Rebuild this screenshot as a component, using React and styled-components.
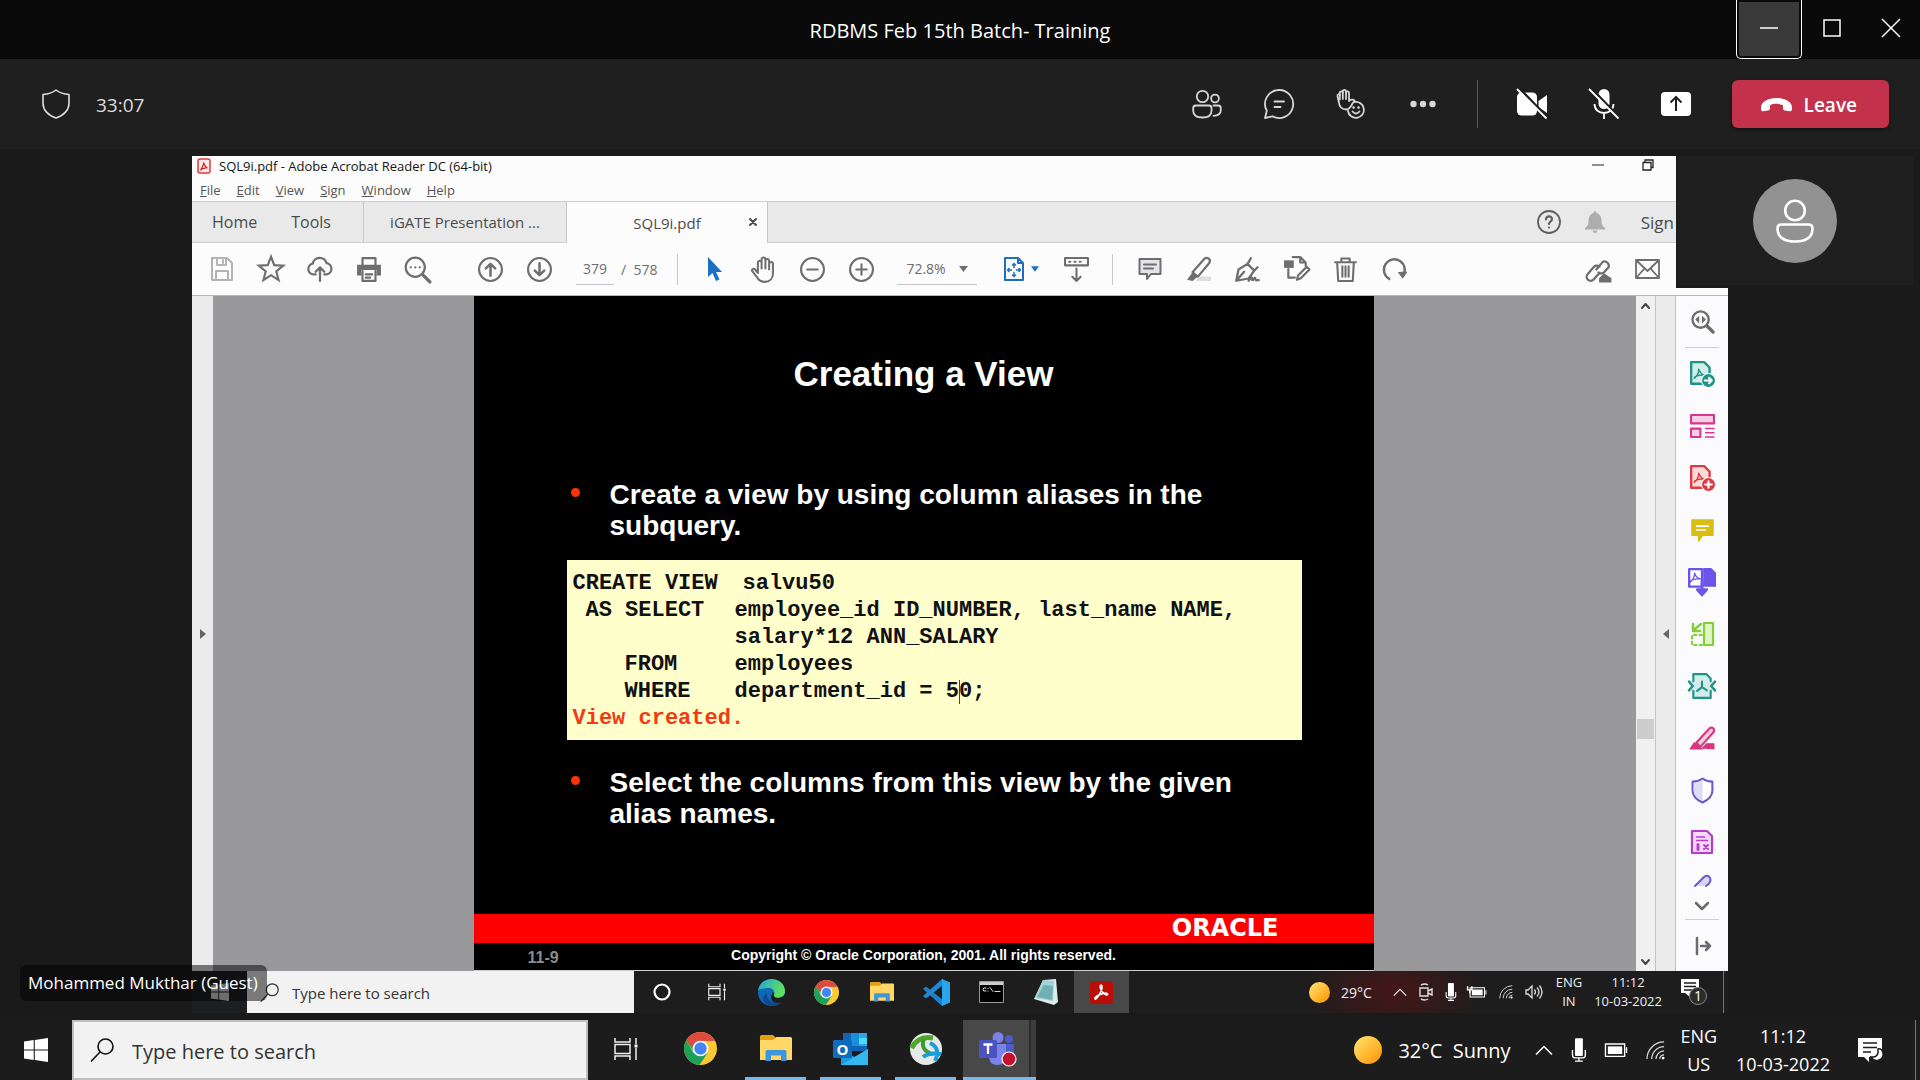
import React from "react";
import styled, { createGlobalStyle } from "styled-components";

const GlobalStyle = createGlobalStyle`
  * { box-sizing: border-box; }
  body { margin: 0; background: #1a1a1a; }
  button, input, select { font: inherit; color: inherit; border: 0; background: none; padding: 0; margin: 0; outline: 0; border-radius: 0; }
  svg { display: block; flex: none; overflow: visible; }
`;

const Page = styled.div`
  min-height: 100vh;
  display: flex;
  flex-direction: column;
  background: #1a1a1a;
  color: #fff;
  font-family: "Open Sans", "Noto Sans", sans-serif;
  overflow: hidden;
`;

/* ---------- meeting window ---------- */
const TitleBar = styled.header`
  display: grid;
  grid-template-columns: 1fr auto 1fr;
  align-items: center;
  height: 59px;
  background: #0a0a0a;
  border-bottom: 1px solid #000;
`;
const WindowTitle = styled.h1`
  grid-column: 2;
  margin: 0;
  font-size: 20px;
  line-height: 26px;
  font-weight: 400;
  padding-top: 2px;
`;
const WindowButtons = styled.div`
  display: flex;
  justify-content: flex-end;
  height: 59px;
`;
const WindowButton = styled.button`
  display: grid;
  place-items: center;
  width: ${(p) => (p.$active ? 66 : 59)}px;
  height: 59px;
  padding-bottom: 3px;
  border-radius: 0 0 5px 5px;
  ${(p) => p.$active && "background: #3a3a3a; border: 1px solid #fff; border-top: 0; box-shadow: inset 0 0 0 2px #0a0a0a;"}
`;
const CallBar = styled.div`
  display: flex;
  align-items: center;
  height: 90px;
  padding: 0 31px 0 42px;
  background: #1f1f1f;
  color: #dcdcdc;
`;
const Timer = styled.time`
  margin-left: 26px;
  padding-top: 2px;
  font-size: 19px;
  line-height: 26px;
`;
const CallActions = styled.div`
  display: flex;
  align-items: center;
  margin-left: auto;
`;
const CallButton = styled.button`
  display: grid;
  place-items: center;
  width: 72px;
  height: 48px;
  color: ${(p) => (p.$bright ? "#fff" : "#d6d6d6")};
`;
const CallDivider = styled.span`
  width: 1px;
  height: 48px;
  margin: 0 18px;
  background: #5a5a5a;
`;
const LeaveButton = styled.button`
  display: flex;
  align-items: center;
  gap: 12px;
  height: 48px;
  margin-left: 20px;
  padding: 2px 32px 0 29px;
  border-radius: 6px;
  background: #c4314b;
  color: #fff;
  font-size: 19px;
  font-weight: 600;
  box-shadow: 0 2px 4px #0006;
`;
const Stage = styled.main`
  position: relative;
  flex: 1;
  display: flex;
  justify-content: center;
  padding: 7px 0;
`;
const Participant = styled.div`
  position: absolute;
  top: 0;
  right: 0;
  width: 244px;
  height: 139px;
  padding: 7px 7px 3px 1px;
  background: #1a1a1a;
`;
const ParticipantFace = styled.div`
  display: grid;
  place-items: center;
  height: 100%;
  background: #1f1f1f;
`;
const Avatar = styled.div`
  display: grid;
  place-items: center;
  width: 84px;
  height: 84px;
  border-radius: 50%;
  background: #929292;
`;
const PresenterName = styled.div`
  position: absolute;
  left: 20px;
  bottom: 19px;
  padding: 5px 9px 6px 8px;
  border-radius: 6px;
  background: #00000080;
  font-size: 17px;
  line-height: 25px;
`;

/* ---------- shared desktop ---------- */
const SharedScreen = styled.section`
  width: 80%;
  display: flex;
  flex-direction: column;
  background: #fcfcfd;
  color: #4b4b4b;
`;
const ReaderTitle = styled.div`
  display: flex;
  align-items: center;
  gap: 8px;
  height: 22px;
  padding: 0 74px 2px 5px;
  color: #161616;
  font-size: 13px;
`;
const ReaderWindowButtons = styled.div`
  display: flex;
  gap: 38px;
  margin-left: auto;
  padding-bottom: 2px;
`;
const BareButton = styled.button`
  display: grid;
  place-items: center;
`;
const MenuBar = styled.nav`
  display: flex;
  align-items: center;
  gap: 16px;
  height: 23px;
  padding-left: 8px;
  font-size: 13px;
  color: #555;
  button::first-letter { text-decoration: underline; }
`;
const TabBar = styled.div`
  display: flex;
  height: 42px;
  background: #e9e9ea;
  border-top: 1px solid #cfcfd1;
  border-bottom: 1px solid #cfcfd1;
  font-size: 15px;
`;
const HomeTabs = styled.div`
  display: flex;
  align-items: center;
  gap: 34px;
  width: 171px;
  padding-left: 20px;
  font-size: 16px;
`;
const DocTab = styled.div`
  position: relative;
  display: grid;
  place-items: center;
  width: ${(p) => (p.$active ? 202 : 203)}px;
  border-left: 1px solid #c6c6c8;
  border-right: ${(p) => (p.$active ? "1px solid #c6c6c8" : "0")};
  ${(p) => p.$active && "background: #fcfcfd; margin-bottom: -1px;"}
`;
const CloseTab = styled.button`
  position: absolute;
  right: 10px;
  top: 16px;
`;
const TabRight = styled.div`
  display: flex;
  align-items: center;
  gap: 24px;
  margin-left: auto;
  padding-right: 54px;
  font-size: 17px;
`;
const SignIn = styled.button`
  padding-left: 12px;
`;
const ToolBar = styled.div`
  display: flex;
  align-items: center;
  height: 53px;
  padding: 0 56px 0 5px;
  border-bottom: 1px solid #b9b9bb;
  color: #6e6e70;
  font-size: 14px;
`;
const ToolGroup = styled.div`
  display: flex;
  margin-left: ${(p) => (p.$end ? "auto" : `${p.$gap || 0}px`)};
`;
const Tool = styled.button`
  display: grid;
  place-items: center;
  width: 49px;
  height: 40px;
  color: ${(p) => p.$color || "inherit"};
`;
const FitTool = styled.button`
  display: flex;
  align-items: center;
  gap: 6px;
  margin-left: 26px;
  color: #1d6fc4;
`;
const PageInput = styled.input`
  width: 38px;
  height: 31px;
  margin: 0 7px 0 12px;
  border-bottom: 1px solid #c4c4c6;
  text-align: center;
`;
const ToolDivider = styled.span`
  width: 1px;
  height: 31px;
  margin-left: ${(p) => p.$gap}px;
  background: #c9c9cb;
`;
const ZoomField = styled.label`
  display: flex;
  align-items: center;
  justify-content: space-between;
  width: 80px;
  height: 31px;
  margin-left: 11px;
  padding: 0 9px;
  border-bottom: 1px solid #c4c4c6;
  select { appearance: none; }
`;
const Document = styled.div`
  flex: 1;
  display: flex;
  background: #99989a;
`;
const NavStrip = styled.button`
  display: grid;
  place-items: center;
  width: ${(p) => (p.$right ? 20 : 21)}px;
  background: #ebebeb;
  border-right: ${(p) => (p.$right ? "1px solid #c4c4c4" : "0")};
`;
const Canvas = styled.div`
  flex: 1;
  display: flex;
  justify-content: center;
  padding-right: 2px;
`;
const ScrollTrack = styled.div`
  display: grid;
  grid-template-rows: 19px 404px 20px 1fr 19px;
  justify-items: center;
  align-items: center;
  width: 20px;
  border-right: 1px solid #c4c4c4;
  background: #f0f0f1;
`;
const ScrollThumb = styled.span`
  grid-row: 3;
  width: 17px;
  height: 20px;
  background: #cdcdcd;
`;
const ScrollEnd = styled.button`
  grid-row: ${(p) => p.$row};
`;
const SidePanel = styled.aside`
  display: flex;
  flex-direction: column;
  align-items: center;
  width: 52px;
  background: #fbfafc;
`;
const SideTool = styled.button`
  display: grid;
  place-items: center;
  width: 52px;
  height: ${(p) => p.$h || 52}px;
  overflow: hidden;
`;
const SideRule = styled.span`
  width: 34px;
  height: 1px;
  background: #cfcfd1;
`;

/* ---------- slide ---------- */
const Slide = styled.article`
  display: flex;
  flex-direction: column;
  width: 900px;
  background: #000;
  border-bottom: 1px solid #d0d0d0;
  color: #fff;
  font-family: "Liberation Sans", Arial, sans-serif;
  font-weight: 700;
`;
const SlideTitle = styled.h2`
  margin: 58px 0 82px;
  text-align: center;
  font-size: 35px;
  line-height: 40px;
`;
const Bullet = styled.p`
  position: relative;
  margin: 0;
  padding: 3px 120px 3px 136px;
  font-size: 28px;
  line-height: 31px;
  &::before {
    content: "";
    position: absolute;
    left: 97px;
    top: 12px;
    width: 9px;
    height: 9px;
    border-radius: 50%;
    background: #ff3300;
  }
`;
const CodeBox = styled.div`
  margin: 16px 72px 24px 93px;
  padding: 10px 6px 8px;
  height: 180px;
  background: #ffffcc;
  color: #111;
  font-family: "Liberation Mono", "Courier New", monospace;
  font-size: 22px;
  line-height: 27px;
`;
const CodeLine = styled.div`
  display: flex;
  white-space: pre;
  color: ${(p) => (p.$result ? "#f23a14" : "inherit")};
`;
const Keyword = styled.span`
  width: ${(p) => (p.$wide ? 170 : 162)}px;
  padding-left: ${(p) => p.$indent * 13}px;
`;
const Caret = styled.span`
  position: relative;
  &::after {
    content: "";
    position: absolute;
    left: 0;
    top: 1px;
    width: 1px;
    height: 24px;
    background: #444;
  }
`;
const OracleBar = styled.div`
  display: flex;
  align-items: center;
  justify-content: flex-end;
  height: 29px;
  margin-top: auto;
  padding-right: 95px;
  background: #ff0000;
  font-family: "DejaVu Sans", sans-serif;
  font-weight: 700;
  font-size: 24px;
  line-height: 29px;
`;
const SlideFooter = styled.footer`
  display: grid;
  grid-template-columns: 1fr auto 1fr;
  height: 27px;
  font-size: 14px;
  line-height: 24px;
`;
const SlideNumber = styled.span`
  padding: 3px 0 0 54px;
  color: #8c8c8c;
  font-size: 16px;
`;

/* ---------- taskbars ---------- */
const InnerTaskbar = styled.div`
  display: flex;
  align-items: center;
  height: 42px;
  background: radial-gradient(ellipse 90px 60px at 1200px 20px, #451717, #1d1d1d);
  color: #eee;
  font-size: 14px;
`;
const StartButton = styled.button`
  display: grid;
  place-items: center;
  width: ${(p) => (p.$large ? 72 : 55)}px;
  height: 100%;
  background: ${(p) => (p.$large ? "none" : "#1d2023")};
`;
const SearchBox = styled.label`
  display: flex;
  align-items: center;
  gap: ${(p) => (p.$large ? 18 : 13)}px;
  width: ${(p) => (p.$large ? 516 : 387)}px;
  height: 100%;
  padding-left: ${(p) => (p.$large ? 16 : 13)}px;
  border: ${(p) => (p.$large ? "2px solid #bfbfbf" : "0")};
  background: #f2f2f2;
  color: #222;
  font-size: ${(p) => (p.$large ? 20 : 15)}px;
  input { flex: 1; min-width: 0; padding-top: 2px; }
  input::placeholder { color: #333; opacity: 1; }
`;
const InnerApp = styled.button`
  display: grid;
  place-items: center;
  width: 55px;
  height: 100%;
  background: ${(p) => (p.$active ? "#484848" : "none")};
`;
const Tray = styled.div`
  display: flex;
  align-items: center;
  height: 100%;
  margin-left: auto;
  padding-right: 4px;
`;
const Weather = styled.button`
  display: flex;
  align-items: center;
  gap: ${(p) => (p.$large ? 16 : 11)}px;
  font-size: ${(p) => (p.$large ? 20 : 14)}px;
  white-space: pre;
`;
const TrayIcons = styled.div`
  display: flex;
  align-items: center;
  gap: ${(p) => (p.$large ? 18 : 12)}px;
  margin: ${(p) => (p.$large ? "0 15px 0 24px" : "0 13px 0 21px")};
`;
const TrayText = styled.button`
  line-height: ${(p) => (p.$large ? 28 : 19)}px;
  font-size: ${(p) => (p.$large ? 18 : 13)}px;
  text-align: center;
  white-space: pre-line;
`;
const DateButton = styled(TrayText)`
  margin-left: ${(p) => (p.$large ? 19 : 12)}px;
`;
const Notify = styled.button`
  margin: ${(p) => (p.$large ? "0 32px 0 28px" : "0 20px 0 19px")};
`;
const TrayEdge = styled.span`
  width: 1px;
  height: 100%;
  background: #777;
`;
const Taskbar = styled.footer`
  display: flex;
  align-items: center;
  height: 60px;
  background: #1c1c1c;
  color: #fff;
`;
const TaskButton = styled.button`
  display: grid;
  place-items: center;
  width: ${(p) => (p.$active ? 73 : 61)}px;
  height: 60px;
  margin-left: ${(p) => (p.$active || p.$first ? 7 : 14)}px;
  padding-right: ${(p) => (p.$active ? 4 : 0)}px;
  border-bottom: 3px solid ${(p) => (p.$open ? "#76b9ed" : "transparent")};
  background: ${(p) => (p.$active ? "linear-gradient(90deg, #484848 66px, #2a2a2a 66px, #2a2a2a 68px, #3c3c3c 68px)" : "none")};
`;

/* ---------- drawings ---------- */
const Line = ({ s = 24, h, vb = "0 0 24 24", w = 2, children, ...r }) => (
  <svg width={s} height={h || s} viewBox={vb} fill="none" stroke="currentColor" strokeWidth={w} strokeLinecap="round" strokeLinejoin="round" aria-hidden="true" {...r}>
    {children}
  </svg>
);

const Chrome = ({ s }) => (
  <svg width={s} height={s} viewBox="0 0 32 32" aria-hidden="true">
    <circle cx="16" cy="16" r="16" fill="#fcc934" />
    <path d="M2.100 8A16 16 0 0 0 15 32l8-12H9Z" fill="#1da05a" />
    <path d="M2.100 8A16 16 0 0 1 29.900 8.500H16L9 13Z" fill="#dd4b3e" />
    <path d="M2.100 8 10 20l6-11Z" fill="#1da05a" />
    <path d="M2.100 8A16 16 0 0 1 29.900 8.500H16q-5 0-7.500 6Z" fill="#dd4b3e" />
    <circle cx="16" cy="16" r="7.600" fill="#fff" />
    <circle cx="16" cy="16" r="6" fill="#4285f4" />
  </svg>
);
const Folder = ({ s }) => (
  <svg width={s} height={s * 0.82} viewBox="0 0 32 26" aria-hidden="true">
    <path d="M0 1.500Q0 0 1.500 0H13l2 2v4H0Z" fill="#e2a010" />
    <path d="M0 5h13l3-3h14.500Q32 2 32 3.500V25H0Z" fill="#ffd866" />
    <path d="M5.500 26V16.500Q5.500 15 7 15h18q1.500 0 1.500 1.500V26H21v-5.500H11V26Z" fill="#3f96dd" />
  </svg>
);
const Windows = ({ s, c = "#fff" }) => (
  <svg width={s} height={s} viewBox="0 0 24 24" fill={c} aria-hidden="true">
    <path d="M0 3.400 9.700 2v9.400H0ZM10.800 1.900 24 0v11.400H10.800ZM0 12.600h9.700V22L0 20.600ZM10.800 12.600H24V24l-13.200-1.900Z" />
  </svg>
);
const TaskView = ({ s }) => (
  <svg width={s} height={s} viewBox="0 0 24 24" fill="none" stroke="#eee" strokeWidth="1.500" aria-hidden="true">
    <path d="M1 1v4h15V1M1 23v-4h15v4M1 7.500h15v9H1ZM22 1v6M22 11v12" />
    <path d="M20.500 7.500h3v3h-3z" fill="#fff" stroke="none" />
  </svg>
);
const Magnify = ({ s, c }) => (
  <svg width={s} height={s} viewBox="0 0 24 24" fill="none" stroke={c} strokeWidth="1.600" aria-hidden="true">
    <circle cx="15.500" cy="8.500" r="7.500" />
    <path d="M10 14 1 23.500" />
  </svg>
);
const Sun = ({ s }) => (
  <svg width={s} height={s} viewBox="0 0 28 28" aria-hidden="true">
    <defs>
      <linearGradient id="sun" x1="0" y1="0" x2="1" y2="1">
        <stop offset=".1" stopColor="#ffe066" />
        <stop offset=".9" stopColor="#ff9a0a" />
      </linearGradient>
    </defs>
    <circle cx="14" cy="14" r="14" fill="url(#sun)" />
  </svg>
);
const ChevronUp = ({ s }) => <Line s={s} h={s / 2} vb="0 0 18 9" w={1.5} strokeLinecap="butt"><path d="m1 8.500 8-8 8 8" /></Line>;
const TrayMic = ({ s }) => (
  <svg width={s * 0.66} height={s} viewBox="0 0 16 24" fill="#fff" aria-hidden="true">
    <rect x="4" width="8" height="18" rx="1" />
    <path d="M1.500 12v5q0 3 3 3h7q3 0 3-3v-5M8 20v3M4 23.300h8" fill="none" stroke="#fff" strokeWidth="1.400" />
  </svg>
);
const Battery = ({ s, plug }) => (
  <svg width={s} height={s * 0.6} viewBox="0 0 25 15" fill="none" stroke="#fff" strokeWidth="1.400" aria-hidden="true">
    <path d="M1.500 1h20v13h-20ZM23.500 4.500v6" />
    <path d="M4 3.500h15v8H4Z" fill="#fff" stroke="none" />
    {plug && <path d="M-2 -1v5h6v-5M1 4v5" strokeWidth="2" />}
  </svg>
);
const Wifi = ({ s }) => (
  <svg width={s} height={s} viewBox="0 0 20 20" fill="none" stroke="#ddd" strokeWidth="1.300" aria-hidden="true">
    <path d="M1 19A18 18 0 0 1 19 1M6 19A13 13 0 0 1 19 6M10.500 19A8.500 8.500 0 0 1 19 10.500M14.500 19A4.500 4.500 0 0 1 19 14.500" />
    <circle cx="18" cy="18" r="1.500" fill="#fff" stroke="none" />
  </svg>
);
const Acrobat = ({ s, box, mark }) => (
  <svg width={s} height={s} viewBox="0 0 24 24" aria-hidden="true">
    <rect width="24" height="24" rx="4" fill={box} />
    <path d="M5 18c1-3 5-4 9-5s5 1 4 1.500c-2 .5-6-3.500-7-6.500s0-4 1-3.500c1.500 1 0 6-2.500 10S5.500 20 5 18Z" fill="none" stroke={mark} strokeWidth="1.700" />
  </svg>
);
const Pdf = "M9 19c3-3 4-6 4-8.500M13 10.500c1 3 2.500 5 5.500 5.500M9 18c2-1.500 5-2.500 9-2";

const ReaderTools = () => (
  <>
    <ToolGroup>
      <Tool aria-label="Save" $color="#b4b4b6"><Line s={24}><path d="M2 1h15l5 5v17H2ZM7 1v7h9V1M6 23v-9h12v9M13 3v3" /></Line></Tool>
      <Tool aria-label="Star"><Line s={28} w={1.8} strokeLinejoin="miter"><path d="m12 1.500 2.800 7.200 7.700.4-6 4.900 2 7.500L12 17.300l-6.500 4.200 2-7.500-6-4.900 7.700-.4Z" /></Line></Tool>
      <Tool aria-label="Upload"><Line s={26} w={2.1}><path d="M8 17H6a5 5 0 0 1-.7-9.900A6.500 6.500 0 0 1 18 6.500 5.300 5.300 0 0 1 18 17h-2M12 23V11M8 14.500l4-4 4 4" /></Line></Tool>
      <Tool aria-label="Print">
        <Line s={26}><path d="M6 8V2h12v6M6 14v9h12v-9M9 17h6M9 20h4" /><path d="M1 8h22v10h-4v-5H5v5H1Z" fill="currentColor" stroke="none" /></Line>
      </Tool>
      <Tool aria-label="Find"><Line s={27}><circle cx="10" cy="10" r="8.500" /><path d="m17 17 6 6" strokeWidth="3" /><path d="M6 10h.1M10 10h.1M14 10h.1" /></Line></Tool>
    </ToolGroup>
    <ToolGroup $gap={24}>
      <Tool aria-label="Previous page"><Line s={25}><circle cx="12" cy="12" r="11" /><path d="M12 18V7M7.500 11 12 6.500l4.500 4.500" strokeWidth="2.400" /></Line></Tool>
      <Tool aria-label="Next page"><Line s={25}><circle cx="12" cy="12" r="11" /><path d="M12 6v11M7.500 13l4.500 4.500 4.500-4.500" strokeWidth="2.400" /></Line></Tool>
    </ToolGroup>
    <PageInput aria-label="Page" defaultValue="379" />
    <span>/&nbsp; 578</span>
    <ToolDivider $gap={20} />
    <ToolGroup $gap={12}>
      <Tool aria-label="Select" $color="#1d6fc4"><svg width="16" height="24" viewBox="0 0 16 24" fill="currentColor"><path d="M1 0v20l4.500-4 3.500 8 3.500-1.500-3.500-7.500H15Z" /></svg></Tool>
      <Tool aria-label="Hand"><Line s={27} w={1.8}><path d="M7 13V5.500a1.700 1.700 0 0 1 3.300 0V11 3a1.700 1.700 0 0 1 3.400 0v8-7a1.700 1.700 0 0 1 3.300 0v8-5a1.700 1.700 0 0 1 3.400 0v8.500c0 4.500-3 7.500-7.400 7.500-3.500 0-5.500-1.500-7-4.500L2 13.500c-.8-1.500 1-3 2.500-1.500L7 15Z" /></Line></Tool>
      <Tool aria-label="Zoom out"><Line s={25}><circle cx="12" cy="12" r="11" /><path d="M7 12h10" /></Line></Tool>
      <Tool aria-label="Zoom in"><Line s={25}><circle cx="12" cy="12" r="11" /><path d="M7 12h10M12 7v10" /></Line></Tool>
    </ToolGroup>
    <ZoomField>
      <select aria-label="Zoom level"><option>72.8%</option></select>
      <svg width="9" height="6" viewBox="0 0 9 6" fill="currentColor"><path d="M0 0h9L4.500 6Z" /></svg>
    </ZoomField>
    <FitTool aria-label="Fit page">
      <Line s={22} h={24} vb="0 0 22 24"><path d="M2 1h13l5 5v17H2ZM15 1v5h5" /><path d="M11 6.500v4M11 15.500v4M4.500 13h4M13.500 13h4M9.500 8 11 6.500 12.500 8M9.500 18l1.500 1.500 1.500-1.500M6 11.500 4.500 13 6 14.500M16 11.500l1.500 1.500-1.500 1.500" strokeWidth="1.500" /></Line>
      <svg width="8" height="6" viewBox="0 0 9 6" fill="currentColor"><path d="M0 0h9L4.500 6Z" /></svg>
    </FitTool>
    <ToolGroup $gap={13}>
      <Tool aria-label="Scroll mode"><Line s={25}><path d="M1 1h22v7H1ZM12 11v12M8 19l4 4 4-4" /><path d="M5 4.500h14" strokeDasharray="1 4" /></Line></Tool>
    </ToolGroup>
    <ToolDivider $gap={11} />
    <ToolGroup $gap={12}>
      <Tool aria-label="Comment"><Line s={24}><path d="M1.500 2h21v15H13l-4 5v-5H1.500Z" fill="#e4e4e6" /><path d="M6 7.500h12M6 11.500h9" /></Line></Tool>
      <Tool aria-label="Highlight"><Line s={26}><path d="M9 23h14v-4H12Z" fill="#dedee0" stroke="none" /><path d="M6 15 17 2.500q2-1.500 4 0t.5 4L11 19Z" /><path d="M6 15 1 22l5 1 5-4Z" fill="currentColor" stroke="none" /></Line></Tool>
      <Tool aria-label="Sign document"><Line s={27}><path d="M2 22 4 12l8-5 6 6-5 7ZM2 22l7-8M12 7l3-5M18 13l3-3M13 22c2-3 3-4 3-2s1 2 2 0 1 2 2 1.500h2" /></Line></Tool>
      <Tool aria-label="Edit"><Line s={26}><path d="M8 1h7l5 5v3M15 1v5h5M4 12v8h6M12 22l1-4 8-8 2.500 2.500-8 8Z" /><path d="M0 4h9v7H0Z" fill="currentColor" stroke="none" /></Line></Tool>
      <Tool aria-label="Delete"><Line s={25}><path d="M2 5h20M8 5V1.500h8V5M4 5l1 18h14l1-18M9 9v10M12 9v10M15 9v10" /></Line></Tool>
      <Tool aria-label="Rotate"><Line s={25} w={2.3}><path d="M7 21A10 10 0 1 1 20 18" /><path d="m16 15 4 5 3.500-5.500Z" fill="currentColor" strokeWidth="1" /></Line></Tool>
    </ToolGroup>
    <ToolGroup $end>
      <Tool aria-label="Share link"><Line s={27} w={2}><path d="m10 12 6-7a4 4 0 0 1 5 5l-4 4.500q-2 2-5 0M13 9.500q-3-2-5 0l-5.500 6.500a3.500 3.500 0 0 0 5 5l5-5.500" /><path d="M13 23v-3l4-4 6 4v3Z" fill="currentColor" strokeWidth="1" /></Line></Tool>
      <Tool aria-label="Email"><Line s={25} h={20} vb="0 0 25 20" w={1.8}><path d="M1 1h23v18H1ZM1 1l11.500 11L24 1M1 19l8-9M24 19l-8-9" /></Line></Tool>
    </ToolGroup>
  </>
);

const SideTools = () => (
  <SidePanel>
    <SideTool aria-label="Search tools" $h={51}><Line s={23} color="#6b6b6b"><circle cx="10" cy="10" r="8.500" strokeWidth="2.400" /><path d="m17 17 6 6" strokeWidth="3.500" /><path d="M8.500 6v8l-4-4ZM11.500 6v8l4-4Z" fill="currentColor" stroke="none" /></Line></SideTool>
    <SideRule />
    <SideTool aria-label="Export PDF"><Line s={26} color="#1f9488"><path d="M2 1h12l5 5v15H2Z" fill="#d2ecea" strokeWidth="2.200" /><path d={Pdf} strokeWidth="1.300" transform="translate(-4 -3)" /><circle cx="18" cy="18" r="6.500" fill="#1f9488" stroke="#fff" strokeWidth="1" /><path d="M14.500 18h6.500M18.500 15.500l2.500 2.500-2.500 2.500" stroke="#fff" /></Line></SideTool>
    <SideTool aria-label="Organize pages"><Line s={25} color="#d8358f"><path d="M1 1h22v8H1ZM1 14h9v8H1Z" fill="#f7cfe5" /><path d="M15 14h8M15 18h8M15 22h8" strokeWidth="1.500" /></Line></SideTool>
    <SideTool aria-label="Create PDF"><Line s={26} color="#dc3a45"><path d="M2 1h12l5 5v15H2Z" fill="#fbdada" strokeWidth="2.200" /><path d={Pdf} strokeWidth="1.300" transform="translate(-4 -3)" /><circle cx="18" cy="18" r="6.500" fill="#dc3a45" stroke="#fff" strokeWidth="1" /><path d="M15 18h6M18 15v6" stroke="#fff" /></Line></SideTool>
    <SideTool aria-label="Add comment"><Line s={23}><path d="M1 1h22v16H12l-4 6v-6H1Z" fill="#d9be13" stroke="#d9be13" strokeWidth="1.500" /><path d="M6 7.500h12M6 11.500h9" stroke="#fff" strokeWidth="1.700" /></Line></SideTool>
    <SideTool aria-label="Combine files"><Line s={28} color="#6a55e8"><path d="M1 1h11v15H1Z" fill="#fff" /><path d="M13 0h7l4 4v12h-11Z" fill="currentColor" stroke="none" /><path d={Pdf} strokeWidth="1.200" transform="translate(-6 -5) scale(.9)" /><path d="M12 12v8M8 18.500l4 4.500 4-4.500Z" fill="currentColor" strokeWidth="2.500" /></Line></SideTool>
    <SideTool aria-label="Compare"><Line s={24} color="#83cf35"><path d="M14 1h9v22h-9Z" fill="#dff6c8" strokeWidth="2.200" /><path d="M12 13H2v10h10" strokeDasharray="2.500 3" /><path d="M11 2 5 7M3 2v7h7" strokeWidth="2.500" /></Line></SideTool>
    <SideTool aria-label="Compress PDF"><Line s={26} color="#1f9488"><path d="M4 8V1h12l4 4v3M4 16v7h16v-7" fill="#d2ecea" /><path d="M4 8v8h16V8" fill="#d2ecea" stroke="none" /><path d="m0 8 3.500 4L0 16M24 8l-3.500 4 3.500 4" strokeWidth="2.400" /><path d="M12 8v5M12 13l-4.500 3.500M12 13l4.500 3" /></Line></SideTool>
    <SideTool aria-label="Redact"><Line s={25} color="#d93680"><path d="m6 16 13-14q2-1 3.500.5t0 3.500L10 20Z" fill="#f7cfe0" /><path d="M0 22l4-6 5 4 3 2h-12ZM12 21l4-4h7v5Z" fill="currentColor" strokeWidth="1" /></Line></SideTool>
    <SideTool aria-label="Protect"><Line s={25} color="#6a5acd"><path d="M12 0.500q4 3 9.500 3v8.500c0 6-5 9.500-9.500 11.500-4.500-2-9.500-5.500-9.500-11.500V3.500q5.500 0 9.500-3Z" fill="#fff" /><path d="M12 2v20c-4-2-8.500-5-8.500-10V5q5 0 8.500-3Z" fill="#dcdcf5" stroke="none" /></Line></SideTool>
    <SideTool aria-label="Prepare form"><Line s={24} color="#b83bd0"><path d="M2 1h15l5 5v17H2Z" fill="#f6dcfa" strokeWidth="2.200" /><path d="M6.500 7h8M6.500 10.500h11" strokeWidth="1.600" /><path d="M8 14.500v5" strokeWidth="3" /><path d="m14 15 4 4M18 15l-4 4" /></Line></SideTool>
    <SideTool aria-label="More tools" $h={24}><Line s={17} h={13} vb="0 0 17 13" color="#6a5acd"><path d="M1 12 10 3q4-3 6 1t-4 8" fill="#d9d3f5" /></Line></SideTool>
    <SideTool aria-label="Scroll tools" $h={27}><Line s={14} h={8} vb="0 0 14 8" w={2.5} color="#6b6b6b"><path d="m1 1 6 6 6-6" /></Line></SideTool>
    <SideRule />
    <SideTool aria-label="Collapse panel" $h={51}><Line s={20} h={18} vb="-3 0 20 18" w={2.5} color="#6b6b6b"><path d="M2 1v16M6 9h9M11 5l4 4-4 4" /></Line></SideTool>
  </SidePanel>
);

const code = [
  { k: "CREATE VIEW", i: 0, t: "salvu50", wide: true },
  { k: "AS SELECT", i: 1, t: "employee_id ID_NUMBER, last_name NAME," },
  { k: "", i: 0, t: "salary*12 ANN_SALARY" },
  { k: "FROM", i: 4, t: "employees" },
  { k: "WHERE", i: 4, t: "department_id = 5", after: "0;" },
];

export default function App() {
  return (
    <Page>
      <GlobalStyle />
      <TitleBar>
        <WindowTitle>RDBMS Feb 15th Batch- Training</WindowTitle>
        <WindowButtons>
          <WindowButton $active aria-label="Minimize"><svg width="18" height="2"><path d="M0 1h18" stroke="#fff" strokeWidth="1.500" /></svg></WindowButton>
          <WindowButton aria-label="Maximize"><svg width="18" height="18"><path d="M1 1h16v16H1Z" fill="none" stroke="#fff" strokeWidth="1.500" /></svg></WindowButton>
          <WindowButton aria-label="Close"><svg width="18" height="18"><path d="m0 0 18 18M18 0 0 18" stroke="#fff" strokeWidth="1.500" /></svg></WindowButton>
        </WindowButtons>
      </TitleBar>

      <CallBar>
        <Line s={28} h={30} vb="0 0 28 30" w={1.6}><path d="M14 1q5 4 13 4.500V14c0 8-6 12.500-13 15C7 26.500 1 22 1 14V5.500Q9 5 14 1Z" /></Line>
        <Timer>33:07</Timer>
        <CallActions>
          <CallButton aria-label="People"><Line s={30} vb="0 0 30 30" w={1.8}><circle cx="10.500" cy="7.500" r="5.700" /><circle cx="23" cy="9.500" r="3.900" /><path d="M4 16.500h13q2.500 0 2.500 2.500v3q0 6.500-9 6.500T1.200 22v-3q0-2.500 2.800-2.500ZM21.500 16.500H26q2.800 0 2.800 2.500v2q0 5.500-7.300 5.800" /></Line></CallButton>
          <CallButton aria-label="Chat"><Line s={30} vb="0 0 30 30" w={1.8}><path d="M15 1a14 14 0 1 1-6.500 26.300L1 29l1.800-7.200A14 14 0 0 1 15 1ZM10.500 12.500h9.500M10.500 18h6" /></Line></CallButton>
          <CallButton aria-label="Reactions">
            <Line s={30} vb="0 0 30 30" w={1.8}>
              <path d="M10.500 20.500C6 20.500 3.500 18.500 3 14L1.500 7c-.3-2 1.800-2.400 2.300-.8V4c0-2.200 3-2.200 3 0V2.500c0-2.200 3.200-2.200 3.200 0V4c0-2.200 3-2.200 3 0v8c1.500-1.500 4.500-2 5.500-.5.500 1.200-1 1.500-2 3-1 2-2.500 6-6 6Z" />
              <path d="M3.800 6v4.500M6.800 4v6M10 4v6" />
              <path d="M18.500 13A8 8 0 1 1 12 22" />
              <path d="M16.500 22.500q3.500 4 7 0" />
              <path d="M17.500 18.500h.1M22.500 18.500h.1" strokeWidth="2.600" />
            </Line>
          </CallButton>
          <CallButton aria-label="More"><svg width="26" height="8" fill="currentColor"><circle cx="3.500" cy="4" r="3.200" /><circle cx="13" cy="4" r="3.200" /><circle cx="22.500" cy="4" r="3.200" /></svg></CallButton>
          <CallDivider />
          <CallButton $bright aria-label="Camera off"><svg width="30" height="30" viewBox="0 0 30 30" fill="#fff"><rect y="3.500" width="20" height="23" rx="4.500" /><path d="m21.500 12 8.500-6v18l-8.500-6Z" /><path d="m3 0 27 28" stroke="#1f1f1f" strokeWidth="2.500" /><path d="m0 0 29.500 29.500" stroke="#fff" strokeWidth="1.800" /></svg></CallButton>
          <CallButton $bright aria-label="Microphone off"><svg width="30" height="30" viewBox="0 0 30 30" fill="#fff"><rect x="9.500" width="11" height="20" rx="5.500" /><path d="M5.500 15c0 12 19 12 19 0M15 24v6" fill="none" stroke="#fff" strokeWidth="1.800" /><path d="m3 0 27 28" stroke="#1f1f1f" strokeWidth="2.500" /><path d="m0 0 29.500 29.500" stroke="#fff" strokeWidth="1.800" /></svg></CallButton>
          <CallButton $bright aria-label="Share"><svg width="30" height="24" viewBox="0 0 30 24"><rect width="30" height="24" rx="4" fill="#fff" /><path d="M15 19V5.500M9.500 10.500 15 5l5.500 5.500" fill="none" stroke="#1f1f1f" strokeWidth="2" /></svg></CallButton>
          <LeaveButton>
            <svg width="31" height="14" viewBox="0 0 31 14" fill="#fff"><path d="M15.500 0C24 0 31 4 31 9.500c0 3.500-.5 4-2.500 3.700l-4.500-.8c-1.600-.3-2-1-2-3V7.200c-3.500-1.800-9.500-1.800-13 0v2.200c0 2-.4 2.700-2 3l-4.500.8C.5 13.500 0 13 0 9.500 0 4 7 0 15.500 0Z" /></svg>
            Leave
          </LeaveButton>
        </CallActions>
      </CallBar>

      <Stage>
        <SharedScreen>
          <ReaderTitle>
            <svg width="14" height="16" viewBox="0 0 14 16"><rect x="1" y="1" width="12" height="14" rx="2" fill="#ffe9e9" stroke="#e03a3a" strokeWidth="1.500" /><path d="M4 11.500c1-2 3-5 2.500-7 1 3 2 5 4 5.500-2-.5-4 0-6.500 1.500Z" fill="none" stroke="#c22" strokeWidth="1.200" /></svg>
            SQL9i.pdf - Adobe Acrobat Reader DC (64-bit)
            <ReaderWindowButtons>
              <BareButton aria-label="Minimize reader"><svg width="12" height="2"><path d="M0 1h12" stroke="#222" /></svg></BareButton>
              <BareButton aria-label="Restore reader"><svg width="12" height="12"><path d="M1 3.500h8V11H1ZM3 3V1h8v7.500H9.500" fill="none" stroke="#222" strokeWidth="1.300" /></svg></BareButton>
            </ReaderWindowButtons>
          </ReaderTitle>
          <MenuBar>
            {["File", "Edit", "View", "Sign", "Window", "Help"].map((m) => <button key={m}>{m}</button>)}
          </MenuBar>
          <TabBar>
            <HomeTabs><button>Home</button><button>Tools</button></HomeTabs>
            <DocTab><button>iGATE Presentation ...</button></DocTab>
            <DocTab $active>
              <button>SQL9i.pdf</button>
              <CloseTab aria-label="Close tab"><Line s={8} vb="0 0 8 8" w={2}><path d="m1 1 6 6M7 1 1 7" /></Line></CloseTab>
            </DocTab>
            <TabRight>
              <BareButton aria-label="Help center"><Line s={24} color="#5f5f61" w={1.8}><circle cx="12" cy="12" r="11" /><path d="M9 9.500c0-4 6-4 6-.5 0 2.500-3 2.500-3 5M12 17.500v.1" strokeWidth="2.200" /></Line></BareButton>
              <BareButton aria-label="Reader notifications"><svg width="20" height="22" viewBox="0 0 20 22" fill="#adadaf"><path d="M10 0q1.500 0 1.500 2 5 1.500 5 8 0 5 3.500 7v1.500H0V17q3.500-2 3.500-7 0-6.500 5-8Q8.500 0 10 0ZM7.500 19.500h5q-.5 2.500-2.500 2.500t-2.500-2.500Z" /></svg></BareButton>
              <SignIn>Sign</SignIn>
            </TabRight>
          </TabBar>
          <ToolBar><ReaderTools /></ToolBar>

          <Document>
            <NavStrip aria-label="Open navigation"><svg width="6" height="10" fill="#666"><path d="M0 0v10l6-5Z" /></svg></NavStrip>
            <Canvas>
              <Slide>
                <SlideTitle>Creating a View</SlideTitle>
                <Bullet>Create a view by using column aliases in the subquery.</Bullet>
                <CodeBox>
                  {code.map((l) => (
                    <CodeLine key={l.t}>
                      <Keyword $indent={l.i} $wide={l.wide}>{l.k}</Keyword>
                      <span>{l.t}{l.after && <Caret>{l.after}</Caret>}</span>
                    </CodeLine>
                  ))}
                  <CodeLine $result>View created.</CodeLine>
                </CodeBox>
                <Bullet>Select the columns from this view by the given alias names.</Bullet>
                <OracleBar>ORACLE</OracleBar>
                <SlideFooter>
                  <SlideNumber>11-9</SlideNumber>
                  <span>Copyright © Oracle Corporation, 2001. All rights reserved.</span>
                </SlideFooter>
              </Slide>
            </Canvas>
            <ScrollTrack>
              <ScrollEnd $row={1} aria-label="Scroll up"><Line s={9} h={6} vb="0 0 9 6" color="#444"><path d="m1 5 3.500-4L8 5" /></Line></ScrollEnd>
              <ScrollThumb />
              <ScrollEnd $row={5} aria-label="Scroll down"><Line s={9} h={6} vb="0 0 9 6" color="#444"><path d="m1 1 3.500 4L8 1" /></Line></ScrollEnd>
            </ScrollTrack>
            <NavStrip $right aria-label="Toggle tools"><svg width="6" height="10" fill="#666"><path d="M6 0v10L0 5Z" /></svg></NavStrip>
            <SideTools />
          </Document>

          <InnerTaskbar>
            <StartButton aria-label="Shared start"><Windows s={18} c="#ddd" /></StartButton>
            <SearchBox><Magnify s={19} c="#333" /><input aria-label="Search shared desktop" placeholder="Type here to search" /></SearchBox>
            <InnerApp aria-label="Cortana"><svg width="18" height="18"><circle cx="9" cy="9" r="7.500" fill="none" stroke="#fff" strokeWidth="2.200" /></svg></InnerApp>
            <InnerApp aria-label="Shared task view"><TaskView s={18} /></InnerApp>
            <InnerApp aria-label="Edge">
              <svg width="27" height="27" viewBox="0 0 27 27">
                <defs><linearGradient id="edge" x1="0" y1="0" x2="1" y2=".4"><stop stopColor="#1fa3e0" /><stop offset="1" stopColor="#5fe05a" /></linearGradient></defs>
                <circle cx="13.500" cy="13.500" r="13.500" fill="#1266b8" />
                <path d="M0 12C1 4 7 0 13.500 0 21 0 27 5 27 12c0 5-4 7-8 7-3 0-4-1.500-3-3.500 1-3-1-6.500-5-6.500-5 0-10 1-11 3Z" fill="url(#edge)" />
                <path d="M9 14c-1 6 4 10 10 9.500 3 0 5-1.500 6-2-2 3.500-6 5.500-11 5.500C6 26 2 19 9 14Z" fill="#0a4a8e" />
                <path d="M15 13c2 1 1 3 .8 4 .5 1.500 3 2 5.500 1.700 3-.2 5-2 5.700-4v8l-5 1c-6 1-9-2-9-6Z" fill="#1d1d1d" />
              </svg>
            </InnerApp>
            <InnerApp aria-label="Shared Chrome"><Chrome s={25} /></InnerApp>
            <InnerApp aria-label="Shared Explorer"><Folder s={24} /></InnerApp>
            <InnerApp aria-label="VS Code"><svg width="27" height="27" viewBox="0 0 27 27"><path d="m0 10 2-2 2 .3L20 21v6l-1 0Z" fill="#1b80c8" /><path d="m0 17 2 2 2-.3L20 6V0l-1 0Z" fill="#1f88d2" /><path d="m19 0 8 3.500v20L19 27Z" fill="#2ba4ee" /></svg></InnerApp>
            <InnerApp aria-label="Command prompt"><svg width="25" height="22" viewBox="0 0 25 22"><path d="M.5.5h24v21H.5Z" fill="#000" stroke="#999" /><path d="M1 1h23v3H1Z" fill="#ccc" /><path d="M7 7q-3-1-3 1.500T7 10M9 7.500v.1M9 10v.1M11 6.500l3 4M16 10.500h5" stroke="#ddd" fill="none" strokeLinecap="round" /></svg></InnerApp>
            <InnerApp aria-label="Notepad"><svg width="25" height="26" viewBox="0 0 25 26"><path d="M9 1 22 0l2 23-4 3L0 20Z" fill="#dfeaea" /><path d="M9 1 20 2l-1 20L1 19Z" fill="#9fd2d4" /><path d="M10 6 19 7l-1 14L3 18Z" fill="#6fb0b3" /></svg></InnerApp>
            <InnerApp $active aria-label="Acrobat"><Acrobat s={23} box="#b90d06" mark="#fff" /></InnerApp>
            <Tray>
              <Weather><Sun s={21} />29°C</Weather>
              <TrayIcons>
                <ChevronUp s={14} />
                <svg width="14" height="18" viewBox="0 0 14 18" fill="none" stroke="#ddd" strokeWidth="1.400"><path d="M1 5h8v8H1ZM9 8l4-2v6l-4-2M2 2q4-2 7 0M2 16q4 2 7 0" /></svg>
                <TrayMic s={18} />
                <Battery s={18} plug />
                <Wifi s={14} />
                <svg width="18" height="14" viewBox="0 0 18 14" fill="none" stroke="#ddd" strokeWidth="1.300"><path d="M1 5h2l4-4v12L3 9H1ZM9.500 4.500q2 2.500 0 5M12 2.500q4 4.500 0 9M14.500.5q5 6.500 0 13" /></svg>
              </TrayIcons>
              <TrayText>{"ENG\nIN"}</TrayText>
              <DateButton>{"11:12\n10-03-2022"}</DateButton>
              <Notify aria-label="Shared notifications">
                <svg width="22" height="26" viewBox="0 0 22 26"><path d="M0 0h18v14H9v4l-5-4H0Z" fill="#fff" /><path d="M3 4h12M3 7.500h12M3 11h8" stroke="#1d1d1d" strokeWidth="1.300" /><circle cx="17" cy="17" r="8.500" fill="#2b2b2b" stroke="#888" /><text x="17" y="22" fill="#fff" fontSize="14" textAnchor="middle">1</text></svg>
              </Notify>
              <TrayEdge />
            </Tray>
          </InnerTaskbar>
        </SharedScreen>

        <Participant>
          <ParticipantFace>
            <Avatar><Line s={38} h={44} vb="0 0 38 44" w={2.6} color="#fff"><circle cx="19" cy="11.500" r="9.800" /><path d="M5.500 25.500h27q4 0 4 4c0 9-7 13-17.500 13S1.500 38.500 1.500 29.500q0-4 4-4Z" /></Line></Avatar>
          </ParticipantFace>
        </Participant>
        <PresenterName>Mohammed Mukthar (Guest)</PresenterName>
      </Stage>

      <Taskbar>
        <StartButton $large aria-label="Start"><Windows s={24} /></StartButton>
        <SearchBox $large><Magnify s={24} c="#111" /><input aria-label="Search" placeholder="Type here to search" /></SearchBox>
        <TaskButton $first aria-label="Task view"><TaskView s={24} /></TaskButton>
        <TaskButton aria-label="Chrome"><Chrome s={33} /></TaskButton>
        <TaskButton $open aria-label="Explorer"><Folder s={32} /></TaskButton>
        <TaskButton $open aria-label="Outlook">
          <svg width="35" height="32" viewBox="0 0 35 32"><path d="M10 0h24v18H10Z" fill="#1066b5" /><path d="M18 0h8v13h-8Z" fill="#1490df" /><path d="M26 0h8v13h-8Z" fill="#28a8ea" /><path d="M26 5h8v6h-8Z" fill="#50d9ff" /><path d="M8 18v14h27V16L22 24Z" fill="#1a9be8" /><path d="m8 32 27-16v16Z" fill="#35b8f1" /><rect y="7" width="19" height="18" rx="1.500" fill="#0f6cbd" /><text x="9.500" y="21.500" fontSize="15" fontWeight="700" fill="#fff" textAnchor="middle">O</text></svg>
        </TaskButton>
        <TaskButton $open aria-label="Cisco AnyConnect">
          <svg width="32" height="32" viewBox="0 0 32 32"><circle cx="16" cy="16" r="16" fill="#e6e9e8" /><path d="M1.500 15C6 7 13 3 23 5" fill="none" stroke="#4fa829" strokeWidth="5" /><path d="M14 6c-3 7 0 13 9 15" fill="none" stroke="#3f9a33" strokeWidth="4" /><path d="M20 10c8 4 9 10 5 18M13 24c5-4 12-4 18-3" fill="none" stroke="#1b9ed8" strokeWidth="4" /></svg>
        </TaskButton>
        <TaskButton $open $active aria-label="Teams">
          <svg width="38" height="34" viewBox="0 0 38 34"><circle cx="19" cy="5.500" r="5.500" fill="#7b83eb" /><circle cx="30" cy="7" r="4" fill="#5059c9" /><path d="M25 12h10v9q0 6-6 6h-4Z" fill="#5059c9" /><path d="M10 12h17v12q0 9-8.500 9T10 24Z" fill="#7b83eb" /><rect y="8" width="18" height="18" rx="1.500" fill="#4b53bc" /><path d="M4.500 12.500h9M9 12.500V22" stroke="#fff" strokeWidth="2.300" /><circle cx="30" cy="27" r="7" fill="#c4112f" stroke="#fff" strokeWidth="1.200" /></svg>
        </TaskButton>
        <Tray>
          <Weather $large><Sun s={28} />{"32°C  Sunny"}</Weather>
          <TrayIcons $large><ChevronUp s={18} /><TrayMic s={24} /><Battery s={24} /><Wifi s={19} /></TrayIcons>
          <TrayText $large>{"ENG\nUS"}</TrayText>
          <DateButton $large>{"11:12\n10-03-2022"}</DateButton>
          <Notify $large aria-label="Notifications">
            <svg width="25" height="24" viewBox="0 0 25 24"><path d="M0 0h24v19H11v5l-5-5H0Z" fill="#fff" /><path d="M5 5h14M5 9.500h14M5 14h8" stroke="#1c1c1c" strokeWidth="1.500" /><path d="M20 11q1 9-7 8 3 5 8 3t4-7-5-4Z" fill="#fff" stroke="#1c1c1c" strokeWidth="1.500" /></svg>
          </Notify>
          <TrayEdge />
        </Tray>
      </Taskbar>
    </Page>
  );
}
